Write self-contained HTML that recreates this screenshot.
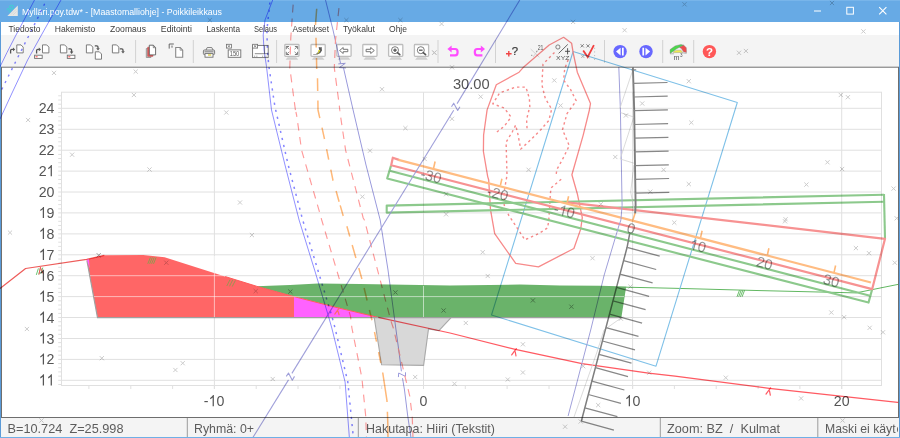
<!DOCTYPE html>
<html><head><meta charset="utf-8"><title>Poikkileikkaus</title>
<style>
html,body{margin:0;padding:0;background:#fff;}
body{width:900px;height:438px;overflow:hidden;font-family:"Liberation Sans",sans-serif;}
svg{display:block;position:absolute;left:0;top:0;}
text{font-family:"Liberation Sans",sans-serif;}
</style></head><body>
<svg width="900" height="438" viewBox="0 0 900 438">
<g id="chrome">
<rect x="0" y="0" width="900" height="438" fill="#ffffff"/>
<rect x="0" y="0" width="900" height="22" fill="#67aae5"/>
<rect x="0" y="0" width="900" height="1" fill="#78b5ea"/>
<rect x="0" y="22" width="900" height="13" fill="#ffffff"/>
<rect x="0" y="35" width="900" height="32" fill="#f4f4f4"/>
<rect x="0" y="66.7" width="900" height="1" fill="#707070"/>
<rect x="0" y="418" width="900" height="20" fill="#f4f4f4"/>
<rect x="0" y="417" width="900" height="1" fill="#6e6e6e"/>
<rect x="1" y="67" width="1" height="351" fill="#6e6e6e"/>
<rect x="898" y="67" width="1" height="351" fill="#6e6e6e"/>
<rect x="0" y="22" width="1" height="416" fill="#5b9bd8"/>
<rect x="899" y="22" width="1" height="416" fill="#5b9bd8"/>
<rect x="0" y="437" width="900" height="1" fill="#6fb0e6"/>
</g>
<g id="title">
<text x="22" y="14.8" font-size="9.5" fill="#ffffff" textLength="200" lengthAdjust="spacingAndGlyphs">Mylläri.poy.tdw* - [Maastomalliohje] - Poikkileikkaus</text>
<path d="M7.4 16.1 L17.8 5.6 L17.8 16.1 Z" fill="#e6e6e4"/><path d="M11 14.5 l5.5 -5.5 M13 15 l3.6 -3.6" stroke="#d0d0d0" stroke-width="0.6"/><text transform="translate(11.2,8.9) rotate(-45)" font-size="6.6" font-weight="bold" fill="#3fd2d0" text-anchor="middle" y="1.5">3D</text>
<path d="M814 11 H821" stroke="#fff" stroke-width="1"/>
<rect x="846.8" y="7.3" width="6.6" height="6.8" fill="none" stroke="#fff" stroke-width="1"/>
<path d="M879.2 7.2 L886.4 14.4 M886.4 7.2 L879.2 14.4" stroke="#fff" stroke-width="1.1"/>
</g>
<g id="menu" font-size="8.7" fill="#3c3c3c">
<text x="8.5" y="32" textLength="32.0" lengthAdjust="spacingAndGlyphs">Tiedosto</text>
<text x="54.7" y="32" textLength="40.5" lengthAdjust="spacingAndGlyphs">Hakemisto</text>
<text x="110.0" y="32" textLength="36.0" lengthAdjust="spacingAndGlyphs">Zoomaus</text>
<text x="160.8" y="32" textLength="31.2" lengthAdjust="spacingAndGlyphs">Editointi</text>
<text x="206.5" y="32" textLength="33.5" lengthAdjust="spacingAndGlyphs">Laskenta</text>
<text x="254.0" y="32" textLength="23.0" lengthAdjust="spacingAndGlyphs">Selaus</text>
<text x="292.5" y="32" textLength="36.5" lengthAdjust="spacingAndGlyphs">Asetukset</text>
<text x="343.0" y="32" textLength="32.0" lengthAdjust="spacingAndGlyphs">Työkalut</text>
<text x="389.0" y="32" textLength="18.0" lengthAdjust="spacingAndGlyphs">Ohje</text>
</g>
<g id="status" font-size="12.6" fill="#5c5c5c">
<rect x="186.8" y="418" width="1" height="19" fill="#9c9c9c"/>
<rect x="357.8" y="418" width="1" height="19" fill="#9c9c9c"/>
<rect x="659.8" y="418" width="1" height="19" fill="#9c9c9c"/>
<rect x="817.3" y="418" width="1" height="19" fill="#9c9c9c"/>
<text x="7.5" y="432.8" xml:space="preserve" textLength="116.0" lengthAdjust="spacingAndGlyphs">B=10.724  Z=25.998</text>
<text x="194.0" y="432.8" xml:space="preserve" textLength="60.0" lengthAdjust="spacingAndGlyphs">Ryhmä: 0+</text>
<text x="366.0" y="432.8" xml:space="preserve" textLength="129.0" lengthAdjust="spacingAndGlyphs">Hakutapa: Hiiri (Tekstit)</text>
<text x="667.0" y="432.8" xml:space="preserve" textLength="113.0" lengthAdjust="spacingAndGlyphs">Zoom: BZ  /  Kulmat</text>
<text x="825.0" y="432.8" xml:space="preserve" textLength="70.6" lengthAdjust="spacingAndGlyphs">Maski ei käyt</text>
<text x="896.6" y="432.8">ö</text>
</g>
<g id="toolbar">
<rect x="135.1" y="40" width="1" height="23" fill="#d2d2d2"/>
<rect x="192.8" y="40" width="1" height="23" fill="#d2d2d2"/>
<rect x="276.1" y="40" width="1" height="23" fill="#d2d2d2"/>
<rect x="437.5" y="40" width="1" height="23" fill="#d2d2d2"/>
<rect x="495.0" y="40" width="1" height="23" fill="#d2d2d2"/>
<rect x="604.0" y="40" width="1" height="23" fill="#d2d2d2"/>
<rect x="662.2" y="40" width="1" height="23" fill="#d2d2d2"/>
<rect x="693.2" y="40" width="1" height="23" fill="#d2d2d2"/>
<path d="M10.6 53.5 V50.6 Q10.6 49.4 11.8 49.4 H13.2" fill="none" stroke="#555" stroke-width="1.3"/><path d="M13 47.6 L15.2 49.4 L13 51.2 Z" fill="#555"/>
<path d="M16.8 44.9 H21.0 L23.2 47.1 V52.9 H16.8 Z" fill="#fff" stroke="#6f6f6f" stroke-width="0.9"/>
<path d="M36.6 53.5 V50.6 Q36.6 49.4 37.8 49.4 H39" fill="none" stroke="#555" stroke-width="1.3"/><path d="M38.8 47.6 L41 49.4 L38.8 51.2 Z" fill="#555"/>
<path d="M42.5 44.9 H46.7 L48.9 47.1 V52.9 H42.5 Z" fill="#fff" stroke="#6f6f6f" stroke-width="0.9"/>
<rect x="34.6" y="55.2" width="7.6" height="3.2" fill="#fff" stroke="#6f6f6f" stroke-width="0.9"/><rect x="35.6" y="56.3" width="2" height="1" fill="#ff4040"/>
<path d="M60.4 44.9 H64.6 L66.8 47.1 V52.9 H60.4 Z" fill="#fff" stroke="#6f6f6f" stroke-width="0.9"/>
<path d="M68.4 48.9 H70.4 Q71.6 48.9 71.6 50.1 V52" fill="none" stroke="#555" stroke-width="1.3"/><path d="M69.8 51.6 L71.6 53.9 L73.4 51.6 Z" fill="#555"/>
<rect x="67.3" y="55.2" width="7.6" height="3.2" fill="#fff" stroke="#6f6f6f" stroke-width="0.9"/><rect x="68.3" y="56.3" width="2" height="1" fill="#ff4040"/>
<path d="M86.4 44.9 H90.6 L92.8 47.1 V52.9 H86.4 Z" fill="#fff" stroke="#6f6f6f" stroke-width="0.9"/>
<path d="M94.8 45.9 H96.8 Q98 45.9 98 47.1 V48.6" fill="none" stroke="#555" stroke-width="1.3"/><path d="M96.2 48.2 L98 50.4 L99.8 48.2 Z" fill="#555"/>
<path d="M95.3 51.8 H99.3 L101.5 54.0 V59.2 H95.3 Z" fill="#fff" stroke="#6f6f6f" stroke-width="0.9"/>
<path d="M112.4 44.9 H116.6 L118.8 47.1 V52.9 H112.4 Z" fill="#fff" stroke="#6f6f6f" stroke-width="0.9"/>
<path d="M119.8 48.9 H121.8 Q123 48.9 123 50.1 V51.6" fill="none" stroke="#555" stroke-width="1.3"/><path d="M121.2 51.2 L123 53.5 L124.8 51.2 Z" fill="#555"/>
<path d="M146.3 48.5 H151 V57.5 H146.3 Z" fill="#c4c4c4" stroke="#8c8c8c" stroke-width="0.8"/>
<path d="M147.7 47.2 H153 V56.3 H147.7 Z" fill="#e85858" stroke="#c05050" stroke-width="0.6"/>
<path d="M149.3 45.2 H153.4 L155.6 47.6 V54.9 H149.3 Z" fill="#fff" stroke="#5c5c5c" stroke-width="0.9"/><path d="M153.3 45.4 V47.7 H155.5" fill="none" stroke="#5c5c5c" stroke-width="0.7"/>
<path d="M169.2 48.6 V44 H173.8" fill="none" stroke="#666" stroke-width="1"/><path d="M171.2 45.8 l1.6 1.6 M172.8 45.8 l-1.6 1.6" stroke="#666" stroke-width="0.7"/>
<path d="M175.7 47.5 H180.2 L182.7 50.1 V57.3 H175.7 Z" fill="#fff" stroke="#888" stroke-width="1.1"/><path d="M180.1 47.7 V50.2 H182.5" fill="none" stroke="#888" stroke-width="0.8"/>
<path d="M206 50 L207.2 47.6 H211.8 L213 50" fill="#fff" stroke="#6f6f6f" stroke-width="0.9"/>
<rect x="203.4" y="50" width="11.2" height="4.6" rx="1" fill="#e8e8e8" stroke="#6f6f6f" stroke-width="0.9"/>
<rect x="205" y="53.6" width="8" height="3.6" fill="#fff" stroke="#6f6f6f" stroke-width="0.9"/>
<rect x="208" y="54.4" width="3.2" height="1.2" fill="#d6c830"/>
<path d="M204.5 51.8 H213.5" stroke="#555" stroke-width="0.7"/>
<rect x="226.4" y="44.3" width="5" height="3.8" fill="#fff" stroke="#6f6f6f" stroke-width="0.8"/><path d="M227.6 45.2 L230.2 47.3 M230.2 45.2 L227.6 47.3" stroke="#6f6f6f" stroke-width="0.7"/>
<rect x="228.2" y="49.9" width="12.6" height="7.4" fill="#fff" stroke="#6f6f6f" stroke-width="0.9"/>
<text x="234.5" y="56.3" font-size="6.6" fill="#555" text-anchor="middle" textLength="9.6" lengthAdjust="spacingAndGlyphs">150</text>
<rect x="252.6" y="45.4" width="15.6" height="12.2" fill="#fff" stroke="#6f6f6f" stroke-width="0.9"/>
<rect x="252.6" y="44.3" width="5" height="3.8" fill="#fff" stroke="#6f6f6f" stroke-width="0.8"/><path d="M253.8 45.2 L256.4 47.3 M256.4 45.2 L253.8 47.3" stroke="#6f6f6f" stroke-width="0.7"/>
<path d="M264.6 45.4 V53.7 M254.8 53.7 H268.2" stroke="#6f6f6f" stroke-width="0.8"/>
<path d="M254 56.2 H258 M262 56.2 H267" stroke="#999" stroke-width="0.9" stroke-dasharray="1 0.8"/>
<rect x="284.8" y="44.5" width="14.2" height="11.9" rx="0.8" fill="#fff" stroke="#bdbdbd" stroke-width="1.3"/><path d="M287.6 57.3 H296.2 L298.3 59.7 H285.6 Z" fill="#cecece"/>
<rect x="311.0" y="44.5" width="14.2" height="11.9" rx="0.8" fill="#fff" stroke="#bdbdbd" stroke-width="1.3"/><path d="M313.8 57.3 H322.4 L324.5 59.7 H311.7 Z" fill="#cecece"/>
<rect x="336.9" y="44.5" width="14.2" height="11.9" rx="0.8" fill="#fff" stroke="#bdbdbd" stroke-width="1.3"/><path d="M339.7 57.3 H348.3 L350.4 59.7 H337.6 Z" fill="#cecece"/>
<rect x="362.8" y="44.5" width="14.2" height="11.9" rx="0.8" fill="#fff" stroke="#bdbdbd" stroke-width="1.3"/><path d="M365.6 57.3 H374.2 L376.3 59.7 H363.5 Z" fill="#cecece"/>
<rect x="388.6" y="44.5" width="14.2" height="11.9" rx="0.8" fill="#fff" stroke="#bdbdbd" stroke-width="1.3"/><path d="M391.4 57.3 H400.0 L402.1 59.7 H389.3 Z" fill="#cecece"/>
<rect x="414.4" y="44.5" width="14.2" height="11.9" rx="0.8" fill="#fff" stroke="#bdbdbd" stroke-width="1.3"/><path d="M417.2 57.3 H425.8 L427.9 59.7 H415.1 Z" fill="#cecece"/>
<path d="M286.3 49.2 v-2.7 h2.7 M297.6 49.2 v-2.7 h-2.7 M286.3 51.8 v2.7 h2.7 M297.6 51.8 v2.7 h-2.7" fill="none" stroke="#6a6a6a" stroke-width="0.9"/>
<path d="M286.6 46.8 l2.7 2.4 M297.2 46.8 l-2.7 2.4 M286.6 54.2 l2.7 -2.4 M297.2 54.2 l-2.7 -2.4" stroke="#777" stroke-width="0.8"/>
<path d="M313.2 54.5 H317.4 Q321 53.6 322 50.6 L321.6 47 L320.4 47 L320.3 48 L319.6 47 L318.6 47.2 L319.2 49.8 Q318.4 53 316 53.9 H313.2 Z" fill="#5a5a5a"/>
<path d="M316.6 53.9 Q319.6 52.9 320.3 50.2 Q319.2 49.6 317.9 50.4 Q319.2 51.2 318.4 52.2 Q317.4 53.2 316.6 53.9 Z" fill="#f4ee20"/>
<path d="M339.6 50.5 l3.6 -3 v1.8 h4.6 v2.4 h-4.6 v1.8 z" fill="#fff" stroke="#666" stroke-width="0.9"/>
<path d="M374.3 50.5 l-3.6 -3 v1.8 h-4.6 v2.4 h4.6 v1.8 z" fill="#fff" stroke="#666" stroke-width="0.9"/>
<circle cx="395.0" cy="50.2" r="3.5" fill="#fff" stroke="#5a5a5a" stroke-width="0.8"/><path d="M397.4 52.6 l2.4 2.1" stroke="#555" stroke-width="1.6" stroke-linecap="round"/><path d="M393.2 50.2 h3.6 M395.0 48.4 v3.6" stroke="#555" stroke-width="1.3"/>
<circle cx="420.8" cy="50.2" r="3.5" fill="#fff" stroke="#5a5a5a" stroke-width="0.8"/><path d="M423.2 52.6 l2.4 2.1" stroke="#555" stroke-width="1.6" stroke-linecap="round"/><path d="M419.0 50.2 h3.6" stroke="#555" stroke-width="1.3"/>
<path d="M450.2 49 H455.2 Q457.6 49 457.6 52 Q457.6 55.4 455.2 55.4 H450" fill="none" stroke="#ff4cff" stroke-width="2.2"/><path d="M447.4 49 L451.6 45.6 V52.4 Z" fill="#ff4cff"/>
<path d="M482.2 49 H477.2 Q474.8 49 474.8 52 Q474.8 55.4 477.2 55.4 H482.4" fill="none" stroke="#ff4cff" stroke-width="2.2"/><path d="M485 49 L480.8 45.6 V52.4 Z" fill="#ff4cff"/>
<path d="M506 53.8 H511.6 M508.8 51 V56.6" stroke="#f04444" stroke-width="1.4"/>
<text x="514.8" y="54.5" font-size="11.4" fill="#3a3a3a" text-anchor="middle" stroke="#3a3a3a" stroke-width="0.2">?</text>
<path d="M530.6 49 L539.4 57.4 M538.4 49.8 L533 57" stroke="#cfcfcf" stroke-width="0.9"/>
<text x="540.6" y="49.7" font-size="6.6" fill="#5a5a5a" text-anchor="middle" textLength="5.8" lengthAdjust="spacingAndGlyphs">21</text>
<rect x="531.2" y="54.8" width="1.1" height="1.1" fill="#909090"/><rect x="536.1" y="50.8" width="1.1" height="1.1" fill="#909090"/>
<circle cx="557.9" cy="47" r="2.1" fill="none" stroke="#666" stroke-width="0.8"/>
<path d="M558.6 53.4 L567.8 44.4" stroke="#555" stroke-width="0.9"/>
<path d="M565 51.3 H570 M567.6 48.2 V54.4" stroke="#444" stroke-width="0.9"/>
<text x="562.8" y="59.8" font-size="5.6" fill="#555" text-anchor="middle" textLength="13.4" lengthAdjust="spacingAndGlyphs">XYZ</text>
<path d="M580.6 44.2 l3.2 3.2 M583.8 44.2 l-3.2 3.2" stroke="#6a6a6a" stroke-width="0.8"/>
<path d="M586.4 44.3 l3.2 3.2 M589.6 44.3 l-3.2 3.2" stroke="#6a6a6a" stroke-width="0.8"/>
<path d="M581.3 54.9 l3.0 3.0 M584.3 54.9 l-3.0 3.0" stroke="#a0a0a0" stroke-width="0.8"/>
<path d="M587.2 55.8 l2.4 2.4 M589.6 55.8 l-2.4 2.4" stroke="#b0b0b0" stroke-width="0.8"/>
<path d="M583.2 50.4 L587.7 57 L593.9 45.2" fill="none" stroke="#f24040" stroke-width="1.8"/>
<path d="M594.6 47.8 V60" stroke="#aaa" stroke-width="0.9" stroke-dasharray="0.9 2.8"/>
<circle cx="620.1" cy="51.6" r="6.7" fill="#6868ff"/><path d="M616 51.6 L620.6 47.8 V55.4 Z M622 47.8 h1.7 v7.6 h-1.7 z" fill="#fff"/>
<circle cx="646" cy="51.6" r="6.7" fill="#6868ff"/><path d="M650.1 51.6 L645.5 47.8 V55.4 Z M642.4 47.8 h1.7 v7.6 h-1.7 z" fill="#fff"/>
<polygon points="670.1,53.4 670.1,49.6 675.1,45.9 680.9,44.5 683.8,45.2 679.5,47.2 676.6,48.8 673,51.5" fill="#4cd84c" stroke="#7a7a7a" stroke-width="0.4"/>
<polygon points="679.5,47.2 683.8,45.2 686.3,47.8 686.5,52.6 683.5,51.7 681.6,48.8" fill="#f04c4c" stroke="#7a7a7a" stroke-width="0.4"/>
<polygon points="673.5,51.5 676.6,50.2 680.9,50.2 682.9,52.4 673.5,52.7" fill="#f0ec50" stroke="#909090" stroke-width="0.4"/>
<path d="M670 53.8 H674 M682.5 52.8 L686.6 53.4" stroke="#8a8a8a" stroke-width="0.6"/>
<text x="676.6" y="59.9" font-size="7.2" fill="#555" text-anchor="middle">m</text><text x="681.2" y="57" font-size="4.6" fill="#555" text-anchor="middle">3</text>
<circle cx="709.4" cy="51.6" r="6.7" fill="#ff5858"/>
<text x="709.4" y="55.8" font-size="11.5" font-weight="bold" fill="#fff" text-anchor="middle">?</text>
</g>
<g id="grid" stroke="#e0e0e0" stroke-width="1" fill="none">
<rect x="61.5" y="92.2" width="820.0" height="293.3"/>
<path d="M61.5 380.3 H881.5"/>
<path d="M61.5 359.4 H881.5"/>
<path d="M61.5 338.5 H881.5"/>
<path d="M61.5 317.5 H881.5"/>
<path d="M61.5 296.6 H881.5"/>
<path d="M61.5 275.7 H881.5"/>
<path d="M61.5 254.8 H881.5"/>
<path d="M61.5 233.9 H881.5"/>
<path d="M61.5 212.9 H881.5"/>
<path d="M61.5 192.0 H881.5"/>
<path d="M61.5 171.1 H881.5"/>
<path d="M61.5 150.2 H881.5"/>
<path d="M61.5 129.3 H881.5"/>
<path d="M61.5 108.3 H881.5"/>
<path d="M214.4 92.2 V389.0"/>
<path d="M423.5 92.2 V389.0"/>
<path d="M632.6 92.2 V389.0"/>
<path d="M841.7 92.2 V389.0"/>
<path d="M58.2 384.5 H61.5 M58.2 380.3 H61.5 M58.2 376.1 H61.5 M58.2 371.9 H61.5 M58.2 367.7 H61.5 M58.2 363.6 H61.5 M58.2 359.4 H61.5 M58.2 355.2 H61.5 M58.2 351.0 H61.5 M58.2 346.8 H61.5 M58.2 342.6 H61.5 M58.2 338.5 H61.5 M58.2 334.3 H61.5 M58.2 330.1 H61.5 M58.2 325.9 H61.5 M58.2 321.7 H61.5 M58.2 317.5 H61.5 M58.2 313.4 H61.5 M58.2 309.2 H61.5 M58.2 305.0 H61.5 M58.2 300.8 H61.5 M58.2 296.6 H61.5 M58.2 292.4 H61.5 M58.2 288.3 H61.5 M58.2 284.1 H61.5 M58.2 279.9 H61.5 M58.2 275.7 H61.5 M58.2 271.5 H61.5 M58.2 267.3 H61.5 M58.2 263.1 H61.5 M58.2 259.0 H61.5 M58.2 254.8 H61.5 M58.2 250.6 H61.5 M58.2 246.4 H61.5 M58.2 242.2 H61.5 M58.2 238.0 H61.5 M58.2 233.9 H61.5 M58.2 229.7 H61.5 M58.2 225.5 H61.5 M58.2 221.3 H61.5 M58.2 217.1 H61.5 M58.2 212.9 H61.5 M58.2 208.8 H61.5 M58.2 204.6 H61.5 M58.2 200.4 H61.5 M58.2 196.2 H61.5 M58.2 192.0 H61.5 M58.2 187.8 H61.5 M58.2 183.7 H61.5 M58.2 179.5 H61.5 M58.2 175.3 H61.5 M58.2 171.1 H61.5 M58.2 166.9 H61.5 M58.2 162.7 H61.5 M58.2 158.5 H61.5 M58.2 154.4 H61.5 M58.2 150.2 H61.5 M58.2 146.0 H61.5 M58.2 141.8 H61.5 M58.2 137.6 H61.5 M58.2 133.4 H61.5 M58.2 129.3 H61.5 M58.2 125.1 H61.5 M58.2 120.9 H61.5 M58.2 116.7 H61.5 M58.2 112.5 H61.5 M58.2 108.3 H61.5 M58.2 104.2 H61.5 M58.2 100.0 H61.5 M58.2 95.8 H61.5"/>
<path d="M88.9 385.5 V389.0 M130.8 385.5 V389.0 M172.6 385.5 V389.0 M214.4 385.5 V389.0 M256.2 385.5 V389.0 M298.0 385.5 V389.0 M339.9 385.5 V389.0 M381.7 385.5 V389.0 M423.5 385.5 V389.0 M465.3 385.5 V389.0 M507.1 385.5 V389.0 M549.0 385.5 V389.0 M590.8 385.5 V389.0 M632.6 385.5 V389.0 M674.4 385.5 V389.0 M716.2 385.5 V389.0 M758.1 385.5 V389.0 M799.9 385.5 V389.0 M841.7 385.5 V389.0"/>
</g>
<g id="axlabels" font-size="15.5" fill="#555555">
<path transform="translate(38.73,385.40) scale(14.183,15.500)" d="M0.373 0 L0.285 0 L0.285 -0.56 Q0.21 -0.49 0.109 -0.452 L0.109 -0.537 Q0.25 -0.605 0.318 -0.716 L0.373 -0.716 Z"/><path transform="translate(46.61,385.40) scale(14.183,15.500)" d="M0.373 0 L0.285 0 L0.285 -0.56 Q0.21 -0.49 0.109 -0.452 L0.109 -0.537 Q0.25 -0.605 0.318 -0.716 L0.373 -0.716 Z"/>
<path transform="translate(38.73,364.48) scale(14.183,15.500)" d="M0.373 0 L0.285 0 L0.285 -0.56 Q0.21 -0.49 0.109 -0.452 L0.109 -0.537 Q0.25 -0.605 0.318 -0.716 L0.373 -0.716 Z"/><text transform="translate(46.61,364.48) scale(0.915,1)">2</text>
<path transform="translate(38.73,343.56) scale(14.183,15.500)" d="M0.373 0 L0.285 0 L0.285 -0.56 Q0.21 -0.49 0.109 -0.452 L0.109 -0.537 Q0.25 -0.605 0.318 -0.716 L0.373 -0.716 Z"/><text transform="translate(46.61,343.56) scale(0.915,1)">3</text>
<path transform="translate(38.73,322.64) scale(14.183,15.500)" d="M0.373 0 L0.285 0 L0.285 -0.56 Q0.21 -0.49 0.109 -0.452 L0.109 -0.537 Q0.25 -0.605 0.318 -0.716 L0.373 -0.716 Z"/><text transform="translate(46.61,322.64) scale(0.915,1)">4</text>
<path transform="translate(38.73,301.72) scale(14.183,15.500)" d="M0.373 0 L0.285 0 L0.285 -0.56 Q0.21 -0.49 0.109 -0.452 L0.109 -0.537 Q0.25 -0.605 0.318 -0.716 L0.373 -0.716 Z"/><text transform="translate(46.61,301.72) scale(0.915,1)">5</text>
<path transform="translate(38.73,280.80) scale(14.183,15.500)" d="M0.373 0 L0.285 0 L0.285 -0.56 Q0.21 -0.49 0.109 -0.452 L0.109 -0.537 Q0.25 -0.605 0.318 -0.716 L0.373 -0.716 Z"/><text transform="translate(46.61,280.80) scale(0.915,1)">6</text>
<path transform="translate(38.73,259.88) scale(14.183,15.500)" d="M0.373 0 L0.285 0 L0.285 -0.56 Q0.21 -0.49 0.109 -0.452 L0.109 -0.537 Q0.25 -0.605 0.318 -0.716 L0.373 -0.716 Z"/><text transform="translate(46.61,259.88) scale(0.915,1)">7</text>
<path transform="translate(38.73,238.96) scale(14.183,15.500)" d="M0.373 0 L0.285 0 L0.285 -0.56 Q0.21 -0.49 0.109 -0.452 L0.109 -0.537 Q0.25 -0.605 0.318 -0.716 L0.373 -0.716 Z"/><text transform="translate(46.61,238.96) scale(0.915,1)">8</text>
<path transform="translate(38.73,218.04) scale(14.183,15.500)" d="M0.373 0 L0.285 0 L0.285 -0.56 Q0.21 -0.49 0.109 -0.452 L0.109 -0.537 Q0.25 -0.605 0.318 -0.716 L0.373 -0.716 Z"/><text transform="translate(46.61,218.04) scale(0.915,1)">9</text>
<text transform="translate(38.73,197.12) scale(0.915,1)">2</text><text transform="translate(46.61,197.12) scale(0.915,1)">0</text>
<text transform="translate(38.73,176.20) scale(0.915,1)">2</text><path transform="translate(46.61,176.20) scale(14.183,15.500)" d="M0.373 0 L0.285 0 L0.285 -0.56 Q0.21 -0.49 0.109 -0.452 L0.109 -0.537 Q0.25 -0.605 0.318 -0.716 L0.373 -0.716 Z"/>
<text transform="translate(38.73,155.28) scale(0.915,1)">2</text><text transform="translate(46.61,155.28) scale(0.915,1)">2</text>
<text transform="translate(38.73,134.36) scale(0.915,1)">2</text><text transform="translate(46.61,134.36) scale(0.915,1)">3</text>
<text transform="translate(38.73,113.44) scale(0.915,1)">2</text><text transform="translate(46.61,113.44) scale(0.915,1)">4</text>
<text transform="translate(203.85,406.20) scale(0.915,1)">-</text><path transform="translate(208.58,406.20) scale(14.183,15.500)" d="M0.373 0 L0.285 0 L0.285 -0.56 Q0.21 -0.49 0.109 -0.452 L0.109 -0.537 Q0.25 -0.605 0.318 -0.716 L0.373 -0.716 Z"/><text transform="translate(216.46,406.20) scale(0.915,1)">0</text>
<text transform="translate(419.56,406.20) scale(0.915,1)">0</text>
<path transform="translate(624.71,406.20) scale(14.183,15.500)" d="M0.373 0 L0.285 0 L0.285 -0.56 Q0.21 -0.49 0.109 -0.452 L0.109 -0.537 Q0.25 -0.605 0.318 -0.716 L0.373 -0.716 Z"/><text transform="translate(632.60,406.20) scale(0.915,1)">0</text>
<text transform="translate(833.81,406.20) scale(0.915,1)">2</text><text transform="translate(841.70,406.20) scale(0.915,1)">0</text>
<text transform="translate(452.90,88.80) scale(0.950,1)">3</text><text transform="translate(461.09,88.80) scale(0.950,1)">0</text><text transform="translate(469.27,88.80) scale(0.950,1)">.</text><text transform="translate(473.37,88.80) scale(0.950,1)">0</text><text transform="translate(481.55,88.80) scale(0.950,1)">0</text>
</g>
<g id="fills">
<polygon points="86.7,259.6 104.3,255.3 143.2,255.1 164.6,257.2 225.0,276.5 256.4,286.2 294.0,296.6 294.0,317.4 97.5,317.4" fill="#ff6666"/>
<polygon points="294.0,296.6 337.0,307.6 378.3,317.4 294.0,317.4" fill="#ff62ff"/>
<polygon points="256.4,286.2 290.0,285.0 318.0,283.6 360.0,284.0 450.0,285.6 520.0,284.6 560.0,285.4 600.0,285.8 626.2,286.6 621.4,317.4 378.3,317.4 337.0,307.6 294.0,296.6" fill="#6ab36a"/>
<polygon points="374.2,317.4 451.3,317.4 438.9,330.7 428.5,328.9 423.6,365.4 381.6,364.8" fill="#d8d8d8"/>
<polyline points="451.3,317.4 438.9,330.7 428.5,328.9 423.6,365.4 381.6,364.8 374.2,317.4" fill="none" stroke="#a9a9a9" stroke-width="1.1"/>
<polyline points="225.0,276.5 256.4,286.2 294.0,296.6 337.0,307.6 378.3,317.4" fill="none" stroke="#ff5a5a" stroke-width="1"/>
<polyline points="86.9,260.5 97.5,317.7 621.4,317.7" fill="none" stroke="#a0a0a0" stroke-width="1.2"/>
<g stroke="#ffffff" stroke-opacity="0.55" stroke-width="1" fill="none">
<path d="M90 275.7 H226"/>
<path d="M94 296.6 H294"/>
<path d="M294 296.6 H624"/>
<path d="M214.4 256 V317"/>
<path d="M423.5 286 V317"/>
</g>
</g>
<g id="lines" fill="none" stroke-linecap="butt" stroke-linejoin="round" style="mix-blend-mode:multiply">
<polyline points="0.0,288.6 25.6,268.5 86.7,259.4 104.3,255.3" stroke="#ee5c5a" stroke-width="1.25"/>
<polyline points="378.3,317.4 450.0,333.0 515.3,349.4 582.0,363.7 648.5,373.2 675.0,376.2 769.2,388.3 900.0,402.6" stroke="#ff5a62" stroke-width="1.25"/>
<polyline points="626.0,287.2 675.0,288.3 760.0,290.6 856.0,292.9 900.0,284.0" stroke="#62b862" stroke-width="1"/>
<polygon points="573.1,51.5 737.3,102.5 656.0,366.2 491.5,315.0" stroke="#7fc1e8" stroke-width="1.1"/>
<polygon points="563.6,37.3 549.2,45.0 522.9,67.8 519.1,72.2 496.3,84.8 487.1,109.9 483.6,135.0 483.4,151.5 487.7,176.6 488.7,180.0 490.5,209.7 494.7,233.7 515.7,263.3 538.5,266.8 573.9,248.5 580.7,229.1 582.3,217.7 577.3,193.7 571.9,174.8 583.2,135.1 589.4,110.0 590.5,103.5 577.3,72.2 573.2,52.8 571.6,43.2" stroke="#f78a8a" stroke-width="1.3"/>
<polyline points="554.5,52.4 543.0,64.2 541.9,84.8 545.3,98.5 551.7,109.1 548.8,120.5 540.8,129.7 530.5,140.0 520.7,149.1 517.9,134.2 515.7,125.1 512.2,132.0 506.1,142.2 506.5,157.1 507.0,175.3 504.2,191.3 504.2,205.1 508.8,215.4 515.7,225.7 524.8,239.8 538.5,233.7 547.6,227.9 548.8,220.0 550.4,193.6 551.0,188.0 562.0,178.5" stroke="#f78a8a" stroke-width="1.4" stroke-dasharray="2.4 3"/>
<polyline points="568.2,59.7 564.7,68.8 563.6,80.2 570.5,89.4 576.2,100.8 567.0,113.7 562.5,129.7 569.3,145.7 562.5,159.4 556.8,169.6 556.0,176.0" stroke="#f78a8a" stroke-width="1.4" stroke-dasharray="2.4 3"/>
<polyline points="496.9,132.0 504.2,126.3 511.1,117.1 504.2,108.0 492.8,103.8 499.7,92.8 515.7,87.1 525.9,87.1 529.4,98.5 529.8,106.8 526.6,119.4 527.1,129.7" stroke="#f78a8a" stroke-width="1.4" stroke-dasharray="2.4 3"/>
<polyline points="884.0,194.7 386.7,205.6 386.7,212.6 884.0,201.7" stroke="#8cc98c" stroke-width="2.1"/>
<polyline points="884.0,194.0 885.0,238.8" stroke="#8cc98c" stroke-width="2.1"/>
<polyline points="871.0,296.0 389.6,170.8" stroke="#8cc98c" stroke-width="2.1"/>
<polyline points="391.0,165.6 387.2,178.4 868.5,302.6 872.2,289.1" stroke="#8cc98c" stroke-width="2.1"/>
<polyline points="567.0,202.3 885.0,238.8 872.2,289.1 391.2,165.2 392.8,157.7 399.0,159.9" stroke="#f79292" stroke-width="2.2"/>
<polyline points="398.4,159.9 871.0,282.5" stroke="#ffbc82" stroke-width="2.2"/>
<path d="M433.6 168.1 L435.1 161.5 M500.4 185.4 L501.9 178.8 M567.1 202.8 L568.6 196.2 M632.4 221.8 L635.2 212.8 M700.6 237.4 L702.1 230.8 M767.4 254.8 L768.9 248.2 M834.1 272.1 L835.6 265.5" stroke="#ffb878" stroke-width="1.6"/>
<polyline points="34.5,0.0 21.9,24.0 15.5,36.0 7.0,52.5 0.0,66.8" stroke="#8484ff" stroke-width="0.9"/>
<polyline points="61.0,0.0 42.0,34.0 27.6,60.0 12.5,92.0 0.0,119.0" stroke="#8484ff" stroke-width="0.9"/>
<polyline points="46.5,0.0 37.0,19.5 18.0,57.0 0.0,93.0" stroke="#8484ff" stroke-width="1.4" stroke-dasharray="2.2 5" stroke-dashoffset="3"/>
<polyline points="272.7,0.0 265.0,20.0 263.2,35.0 264.0,50.0 266.5,66.6 271.5,110.0 285.0,165.0 299.1,220.0 314.6,270.0 328.6,316.7 331.8,328.0 345.1,382.0 349.4,438.0" stroke="#8484ff" stroke-width="0.9"/>
<polyline points="269.9,2.5 266.9,30.0 267.4,50.0 268.8,66.0 274.5,104.0 275.7,110.0 288.2,165.0 302.7,220.0 317.2,268.0 331.8,316.0 335.0,328.0 347.8,382.0 353.4,438.0" stroke="#8484ff" stroke-width="1.5" stroke-dasharray="2.2 5"/>
<polyline points="325.5,0.0 333.0,30.0 340.6,63.6" stroke="#9a9adc" stroke-width="1"/>
<polyline points="338.3,63.9 345.3,63.3 339.3,67.6 345.9,68.0" stroke="#9a9adc" stroke-width="1"/>
<polyline points="343.5,67.9 353.1,110.0 366.0,165.0 380.2,220.0 388.0,270.0 395.9,329.0 399.0,352.0 401.4,371.3" stroke="#9a9adc" stroke-width="1"/>
<polyline points="398.4,377.1 398.7,373.0 405.5,376.4 405.5,372.3" stroke="#9a9adc" stroke-width="1"/>
<polyline points="402.5,378.2 404.5,390.0 407.6,415.0 411.0,438.0" stroke="#9a9adc" stroke-width="1"/>
<polyline points="293.3,2.5 290.8,37.7 289.8,67.8 295.4,110.0 295.9,112.0" stroke="#ff9a9a" stroke-width="1.15" stroke-dasharray="8 6" stroke-dashoffset="11.9"/>
<polyline points="295.9,112.0 296.6,115.0 301.6,150.2 320.5,215.5 321.7,220.0 350.6,316.7 351.9,328.0 361.9,378.0 365.7,416.0 366.5,438.0" stroke="#ff9a9a" stroke-width="1.15" stroke-dasharray="7.6 6.4" stroke-dashoffset="2.7"/>
<polyline points="339.3,5.0 335.5,40.0 334.3,67.8 339.3,105.5 339.8,110.5" stroke="#ff9a9a" stroke-width="1.15" stroke-dasharray="8 6" stroke-dashoffset="10.8"/>
<polyline points="339.8,110.5 340.0,112.5 345.6,150.2 363.2,218.0 364.4,220.0 390.8,320.5 393.3,328.0 409.7,395.8 412.2,416.0 413.0,438.0" stroke="#ff9a9a" stroke-width="1.15" stroke-dasharray="7.6 6.4" stroke-dashoffset="6.8"/>
<path d="M316.7 8.8 L315.5 25.0 M316.0 37.7 L316.2 47.5 M316.5 57.9 L316.7 69.0 L316.7 69.1 M317.5 78.3 L317.7 91.0 M317.9 100.6 L318.0 110.0 L319.8 118.1 M322.0 127.6 L324.2 137.6 L324.5 139.0 M326.6 149.2 L328.7 159.7 M330.8 169.7 L333.0 180.4 L333.1 180.7 M336.1 191.0 L339.1 201.7 M340.2 205.4 L343.1 215.5 L343.3 216.1 M346.9 226.3 L349.8 236.5 M352.2 245.0 L355.9 258.0 M358.8 268.0 L361.9 279.0 M364.1 288.0 L367.1 300.5 M369.4 310.0 L372.0 320.3 M374.5 332.0 L376.5 341.6 M378.6 352.0 L380.8 363.0 M382.7 372.5 L382.8 373.2 L387.0 400.9 L387.0 402.0 M387.4 411.7 L387.8 423.5 L388.0 438.0" stroke="#ffb878" stroke-width="1.5"/>
<polyline points="519.8,0.0 457.1,103.6" stroke="#a0a0da" stroke-width="1.1"/>
<polyline points="451.5,106.7 453.7,103.2 457.7,110.5 459.9,106.7" stroke="#a0a0da" stroke-width="1.1"/>
<polyline points="453.7,110.2 291.9,373.4" stroke="#a0a0da" stroke-width="1.1"/>
<polyline points="286.3,376.4 288.5,373.0 292.3,380.2 294.5,376.4" stroke="#a0a0da" stroke-width="1.1"/>
<polyline points="288.5,379.9 252.6,438.0" stroke="#a0a0da" stroke-width="1.1"/>
<polyline points="618.8,67.0 620.4,110.0 622.1,205.5 620.9,220.0 618.8,226.0 604.2,275.0 590.7,330.0 568.1,416.0" stroke="#a0a0da" stroke-width="1"/>
<polyline points="632.7,70.4 620.0,108.0" stroke="#d2d2d2" stroke-width="0.8"/>
<polyline points="620.8,112.7 632.7,116.7" stroke="#d2d2d2" stroke-width="0.8"/>
<polyline points="633.5,118.0 620.2,159.0 633.9,163.2" stroke="#d2d2d2" stroke-width="0.8"/>
<polyline points="633.9,165.0 630.7,192.0 634.5,212.0" stroke="#d2d2d2" stroke-width="0.8"/>
<polyline points="604.0,330.0 597.0,352.0 574.0,417.0" stroke="#d2d2d2" stroke-width="0.8"/>
<polyline points="621.0,318.0 604.0,330.0" stroke="#d2d2d2" stroke-width="0.8"/>
<polyline points="632.9,67.6 634.2,110.0 635.6,205.0 635.2,213.2" stroke="#7e7e7e" stroke-width="1.9"/>
<polyline points="629.7,233.6 627.1,247.3 623.5,260.9 581.3,421.2" stroke="#7e7e7e" stroke-width="1.5"/>
<path d="M631.4 69.8 H636.2" stroke="#7e7e7e" stroke-width="1"/>
<path d="M633.2 83.3 L667.5 82.5 M633.4 97.0 L667.7 96.2 M633.6 110.7 L667.9 109.9 M633.8 124.5 L668.1 123.7 M634.1 138.2 L668.4 137.4 M634.3 151.9 L668.6 151.1 M634.5 165.6 L668.8 164.8 M634.8 179.3 L669.1 178.5 M635.0 193.1 L669.3 192.3 M627.1 247.3 L659.7 256.2 M623.6 260.7 L656.2 269.5 M620.0 274.1 L652.6 282.9 M616.5 287.4 L649.1 296.3 M613.0 300.8 L645.6 309.7 M609.5 314.2 L642.1 323.1 M605.9 327.6 L638.5 336.4 M602.4 341.0 L635.0 349.8 M598.9 354.3 L631.5 363.2 M595.4 367.7 L628.0 376.6 M591.8 381.1 L624.4 390.0 M588.3 394.5 L620.9 403.3 M584.8 407.9 L617.4 416.7 M581.3 421.2 L613.9 430.1" stroke="#888888" stroke-width="1.25"/>
</g>
<g id="striplabels" font-size="14.6" fill="#969696" style="mix-blend-mode:multiply">
<g transform="translate(431.1,176.1) rotate(14.5)"><text transform="translate(-10.55,5.00) scale(1.000,1)">-</text><text transform="translate(-5.69,5.00) scale(1.000,1)">3</text><text transform="translate(2.43,5.00) scale(1.000,1)">0</text></g>
<g transform="translate(497.8,193.5) rotate(14.5)"><text transform="translate(-10.55,5.00) scale(1.000,1)">-</text><text transform="translate(-5.69,5.00) scale(1.000,1)">2</text><text transform="translate(2.43,5.00) scale(1.000,1)">0</text></g>
<g transform="translate(564.5,211.0) rotate(14.5)"><text transform="translate(-10.55,5.00) scale(1.000,1)">-</text><path transform="translate(-5.69,5.00) scale(14.600,14.600)" d="M0.373 0 L0.285 0 L0.285 -0.56 Q0.21 -0.49 0.109 -0.452 L0.109 -0.537 Q0.25 -0.605 0.318 -0.716 L0.373 -0.716 Z"/><text transform="translate(2.43,5.00) scale(1.000,1)">0</text></g>
<g transform="translate(631.2,228.4) rotate(14.5)"><text transform="translate(-4.06,5.00) scale(1.000,1)">0</text></g>
<g transform="translate(697.9,245.8) rotate(14.5)"><path transform="translate(-8.12,5.00) scale(14.600,14.600)" d="M0.373 0 L0.285 0 L0.285 -0.56 Q0.21 -0.49 0.109 -0.452 L0.109 -0.537 Q0.25 -0.605 0.318 -0.716 L0.373 -0.716 Z"/><text transform="translate(0.00,5.00) scale(1.000,1)">0</text></g>
<g transform="translate(764.6,263.3) rotate(14.5)"><text transform="translate(-8.12,5.00) scale(1.000,1)">2</text><text transform="translate(0.00,5.00) scale(1.000,1)">0</text></g>
<g transform="translate(831.3,280.8) rotate(14.5)"><text transform="translate(-8.12,5.00) scale(1.000,1)">3</text><text transform="translate(0.00,5.00) scale(1.000,1)">0</text></g>
</g>
<g id="marks" style="mix-blend-mode:multiply">
<path d="M51.9 70.8 l4.2 4.2 M56.1 70.8 l-4.2 4.2 M133.6 69.5 l4.2 4.2 M137.8 69.5 l-4.2 4.2 M131.8 92.9 l4.2 4.2 M136.0 92.9 l-4.2 4.2 M439.5 21.8 l4.2 4.2 M443.7 21.8 l-4.2 4.2 M432.2 50.7 l4.2 4.2 M436.4 50.7 l-4.2 4.2 M379.9 87.1 l4.2 4.2 M384.1 87.1 l-4.2 4.2 M622.5 28.1 l4.2 4.2 M626.7 28.1 l-4.2 4.2 M449.9 65.2 l4.2 4.2 M454.1 65.2 l-4.2 4.2 M552.2 78.3 l4.2 4.2 M556.4 78.3 l-4.2 4.2 M478.6 94.6 l4.2 4.2 M482.8 94.6 l-4.2 4.2 M558.5 103.4 l4.2 4.2 M562.7 103.4 l-4.2 4.2 M640.1 101.4 l4.2 4.2 M644.3 101.4 l-4.2 4.2 M861.3 29.3 l4.2 4.2 M865.5 29.3 l-4.2 4.2 M736.9 50.7 l4.2 4.2 M741.1 50.7 l-4.2 4.2 M743.8 48.9 l4.2 4.2 M748.0 48.9 l-4.2 4.2 M686.7 79.1 l4.2 4.2 M690.9 79.1 l-4.2 4.2 M838.7 92.9 l4.2 4.2 M842.9 92.9 l-4.2 4.2 M845.8 95.1 l4.2 4.2 M850.0 95.1 l-4.2 4.2 M26.0 117.9 l4.2 4.2 M30.2 117.9 l-4.2 4.2 M70.0 152.6 l4.2 4.2 M74.2 152.6 l-4.2 4.2 M147.4 167.4 l4.2 4.2 M151.6 167.4 l-4.2 4.2 M224.2 110.4 l4.2 4.2 M228.4 110.4 l-4.2 4.2 M403.3 126.0 l4.2 4.2 M407.5 126.0 l-4.2 4.2 M367.9 148.6 l4.2 4.2 M372.1 148.6 l-4.2 4.2 M360.3 194.6 l4.2 4.2 M364.5 194.6 l-4.2 4.2 M237.9 200.4 l4.2 4.2 M242.1 200.4 l-4.2 4.2 M422.6 156.9 l4.2 4.2 M426.8 156.9 l-4.2 4.2 M444.0 192.1 l4.2 4.2 M448.2 192.1 l-4.2 4.2 M444.0 212.2 l4.2 4.2 M448.2 212.2 l-4.2 4.2 M449.9 116.7 l4.2 4.2 M454.1 116.7 l-4.2 4.2 M623.8 113.4 l4.2 4.2 M628.0 113.4 l-4.2 4.2 M613.2 154.9 l4.2 4.2 M617.4 154.9 l-4.2 4.2 M526.5 167.7 l4.2 4.2 M530.7 167.7 l-4.2 4.2 M661.5 167.7 l4.2 4.2 M665.7 167.7 l-4.2 4.2 M648.2 189.6 l4.2 4.2 M652.4 189.6 l-4.2 4.2 M598.7 202.1 l4.2 4.2 M602.9 202.1 l-4.2 4.2 M689.2 120.5 l4.2 4.2 M693.4 120.5 l-4.2 4.2 M825.4 160.2 l4.2 4.2 M829.6 160.2 l-4.2 4.2 M840.0 166.9 l4.2 4.2 M844.2 166.9 l-4.2 4.2 M686.7 182.0 l4.2 4.2 M690.9 182.0 l-4.2 4.2 M804.3 182.5 l4.2 4.2 M808.5 182.5 l-4.2 4.2 M891.5 186.5 l4.2 4.2 M895.7 186.5 l-4.2 4.2 M783.5 217.2 l4.2 4.2 M787.7 217.2 l-4.2 4.2 M7.9 230.5 l4.2 4.2 M12.1 230.5 l-4.2 4.2 M24.8 326.9 l4.2 4.2 M29.0 326.9 l-4.2 4.2 M249.8 233.0 l4.2 4.2 M254.0 233.0 l-4.2 4.2 M480.6 250.1 l4.2 4.2 M484.8 250.1 l-4.2 4.2 M485.6 273.9 l4.2 4.2 M489.8 273.9 l-4.2 4.2 M590.4 256.1 l4.2 4.2 M594.6 256.1 l-4.2 4.2 M463.7 320.9 l4.2 4.2 M467.9 320.9 l-4.2 4.2 M628.3 284.5 l4.2 4.2 M632.5 284.5 l-4.2 4.2 M618.8 316.6 l4.2 4.2 M623.0 316.6 l-4.2 4.2 M782.9 219.2 l4.2 4.2 M787.1 219.2 l-4.2 4.2 M853.8 246.0 l4.2 4.2 M858.0 246.0 l-4.2 4.2 M866.9 251.1 l4.2 4.2 M871.1 251.1 l-4.2 4.2 M892.7 260.6 l4.2 4.2 M896.9 260.6 l-4.2 4.2 M829.2 310.4 l4.2 4.2 M833.4 310.4 l-4.2 4.2 M842.0 315.1 l4.2 4.2 M846.2 315.1 l-4.2 4.2 M867.6 325.7 l4.2 4.2 M871.8 325.7 l-4.2 4.2 M99.7 356.1 l4.2 4.2 M103.9 356.1 l-4.2 4.2 M180.6 361.1 l4.2 4.2 M184.8 361.1 l-4.2 4.2 M173.3 367.9 l4.2 4.2 M177.5 367.9 l-4.2 4.2 M39.4 418.4 l4.2 4.2 M43.6 418.4 l-4.2 4.2 M270.6 376.9 l4.2 4.2 M274.8 376.9 l-4.2 4.2 M413.1 374.9 l4.2 4.2 M417.3 374.9 l-4.2 4.2 M520.8 342.2 l4.2 4.2 M525.0 342.2 l-4.2 4.2 M520.8 370.4 l4.2 4.2 M525.0 370.4 l-4.2 4.2 M505.7 377.4 l4.2 4.2 M509.9 377.4 l-4.2 4.2 M452.4 381.7 l4.2 4.2 M456.6 381.7 l-4.2 4.2 M581.1 364.1 l4.2 4.2 M585.3 364.1 l-4.2 4.2 M596.1 403.0 l4.2 4.2 M600.3 403.0 l-4.2 4.2 M563.0 424.6 l4.2 4.2 M567.2 424.6 l-4.2 4.2 M578.6 419.4 l4.2 4.2 M582.8 419.4 l-4.2 4.2 M647.1 370.6 l4.2 4.2 M651.3 370.6 l-4.2 4.2 M880.9 330.2 l4.2 4.2 M885.1 330.2 l-4.2 4.2 M723.7 375.6 l4.2 4.2 M727.9 375.6 l-4.2 4.2 M799.0 396.3 l4.2 4.2 M803.2 396.3 l-4.2 4.2 M840.5 418.4 l4.2 4.2 M844.7 418.4 l-4.2 4.2 M432.3 50.4 l4.2 4.2 M436.5 50.4 l-4.2 4.2 M672.2 220.5 l4.2 4.2 M676.4 220.5 l-4.2 4.2 M894.6 216.2 l4.2 4.2 M898.8 216.2 l-4.2 4.2" stroke="#cbcbcb" stroke-width="1.0" fill="none"/>
<path d="M207.7 18.0 l4.2 4.2 M211.9 18.0 l-4.2 4.2 M344.3 18.0 l4.2 4.2 M348.5 18.0 l-4.2 4.2 M398.3 18.0 l4.2 4.2 M402.5 18.0 l-4.2 4.2 M571.0 19.8 l4.2 4.2 M575.2 19.8 l-4.2 4.2 M682.4 2.2 l4.2 4.2 M686.6 2.2 l-4.2 4.2 M829.9 0.9 l4.2 4.2 M834.1 0.9 l-4.2 4.2" stroke="#cbcbcb" stroke-width="1.0" fill="none"/>
<path d="M164.2 260.6 l4.2 4.2 M168.4 260.6 l-4.2 4.2 M253.6 289.0 l4.2 4.2 M257.8 289.0 l-4.2 4.2" stroke="#cbcbcb" stroke-width="1.0" fill="none"/>
<path d="M288.2 289.5 l4.2 4.2 M292.4 289.5 l-4.2 4.2 M393.3 290.3 l4.2 4.2 M397.5 290.3 l-4.2 4.2 M441.5 308.4 l4.2 4.2 M445.7 308.4 l-4.2 4.2 M530.8 298.3 l4.2 4.2 M535.0 298.3 l-4.2 4.2 M569.3 304.6 l4.2 4.2 M573.5 304.6 l-4.2 4.2" stroke="#a6a6a6" stroke-width="1.0" fill="none"/>
<path d="M96.6 253.1 l4.2 4.2 M100.8 253.1 l-4.2 4.2" stroke="#8a8a8a" stroke-width="0.8" fill="none"/>
<path d="M36.3 274.9 l2.1 -6.5 M38.7 274.5 l1.8 -6.5 M41.1 273.6 l1.7 -6" stroke="#68c470" stroke-width="1" fill="none"/>
<path d="M39 274.5 L40.4 267.2 L42.9 273.5" stroke="#f05858" stroke-width="1" fill="none"/>
<path d="M737.0 296.8 l2.4 -6.4 M738.7 296.8 l2.4 -6.4 M740.4 296.8 l2.4 -6.4 M742.1 296.8 l2.4 -6.4" stroke="#5cb85c" stroke-width="0.9" fill="none"/>
<path d="M516.3 348.6 l-4.6 6.3 M515.2 351.6 l0.8 4.4" stroke="#ff5a64" stroke-width="1.2" fill="none" stroke-linecap="round"/>
<path d="M770.6 387.8 l-4.6 6.3 M769.5 390.8 l0.8 4.4" stroke="#ff5a64" stroke-width="1.2" fill="none" stroke-linecap="round"/>
</g>
<path d="M339.3 307.8 l-4.5 6.3 M337.9 311 l1.2 3.8" stroke="#ff6a6a" stroke-width="1.2" fill="none" stroke-linecap="round"/>
<path d="M147.8 263.8 l2.6 -6.4 M149.7 263.8 l2.6 -6.4 M151.6 263.8 l2.6 -6.4 M153.5 263.8 l2.6 -6.4" stroke="#93994f" stroke-width="1.0" fill="none"/>
<path d="M226.8 286 l3.2 -6.4 M229.5 286.3 l3.2 -6.4 M232.2 286.6 l3.2 -6.2" stroke="#93994f" stroke-width="0.9" fill="none"/>
<polygon points="86.9,259.7 88.9,259.2 89.7,268.6" fill="#ff62ff"/>
<rect x="898" y="67" width="1" height="351" fill="#6e6e6e"/><rect x="898" y="418" width="1" height="19" fill="#f4f4f4"/><rect x="899" y="22" width="1" height="416" fill="#5b9bd8"/><rect x="0" y="437" width="900" height="1" fill="#6fb0e6"/>
</svg>
</body></html>
